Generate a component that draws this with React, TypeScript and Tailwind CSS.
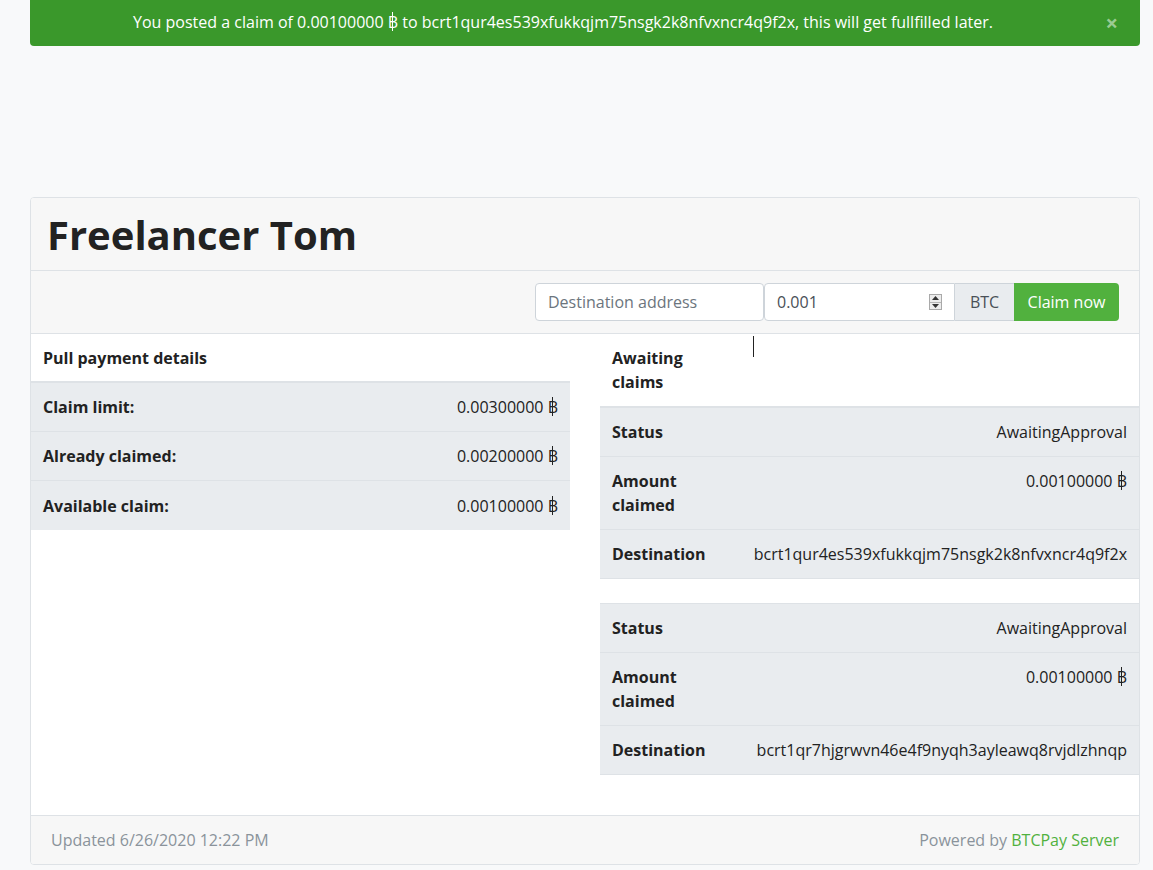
import React from "react";

type Row = { label: string; value: string; btc?: boolean; tall?: boolean };

const details: Row[] = [
  { label: "Claim limit:", value: "0.00300000", btc: true },
  { label: "Already claimed:", value: "0.00200000", btc: true },
  { label: "Available claim:", value: "0.00100000", btc: true },
];

const claims: Row[][] = [
  [
    { label: "Status", value: "AwaitingApproval" },
    { label: "Amount claimed", value: "0.00100000", btc: true, tall: true },
    { label: "Destination", value: "bcrt1qur4es539xfukkqjm75nsgk2k8nfvxncr4q9f2x" },
  ],
  [
    { label: "Status", value: "AwaitingApproval" },
    { label: "Amount claimed", value: "0.00100000", btc: true, tall: true },
    { label: "Destination", value: "bcrt1qr7hjgrwvn46e4f9nyqh3ayleawq8rvjdlzhnqp" },
  ],
];

// bitcoin-ish baht sign: a B with a stroke through it, like the reference's fallback glyph
function Baht() {
  return (
    <span className="relative inline-block" aria-label="฿">
      B
      <span className="absolute left-[4px] top-[2px] bottom-[3px] w-[1.5px] bg-current" />
    </span>
  );
}

function Spinner() {
  return (
    <div className="flex flex-col w-[13px] h-[16px] border border-[#a9a9a9] bg-[#ececec]">
      <div className="flex-1 flex items-center justify-center border-b border-[#b5b5b5]">
        <svg width="7" height="4" viewBox="0 0 7 4"><path d="M3.5 0L7 4H0z" fill="#333" /></svg>
      </div>
      <div className="flex-1 flex items-center justify-center">
        <svg width="7" height="4" viewBox="0 0 7 4"><path d="M0 0h7L3.5 4z" fill="#333" /></svg>
      </div>
    </div>
  );
}

export default function App() {
  return (
    <div
      className="w-full h-[870px] bg-[#f8f9fa] text-[#222] text-[16px] overflow-hidden"
      style={{ fontFamily: '"Open Sans", sans-serif' }}
    >
      {/* Alert */}
      <div className="ml-[30px] w-[1110px] h-[46px] bg-[#3a982b] rounded-b-[4px] flex items-center pl-5 pr-16 relative">
        <div className="flex-1 text-center text-white leading-6 pb-[2px]">
          You posted a claim of 0.00100000 <Baht /> to bcrt1qur4es539xfukkqjm75nsgk2k8nfvxncr4q9f2x, this will get fullfilled later.
        </div>
        <span className="absolute right-[22px] top-[10px] text-[22px] font-bold leading-6 text-[#9bcb92]">×</span>
      </div>

      {/* Card */}
      <div className="ml-[30px] w-[1110px] mt-[151px] bg-white border border-[#dee2e6] rounded-[4px] overflow-hidden">
        <div className="h-[73px] bg-[#f7f7f7] border-b border-[#dee2e6] px-[16px] flex items-center">
          <h1 className="text-[40px] font-bold leading-[48px] text-[#222] pt-[1px]">Freelancer Tom</h1>
        </div>

        <div className="h-[63px] bg-[#f7f7f7] border-b border-[#dee2e6] flex items-center justify-end pr-[20px]">
          <div className="flex h-[38px]">
            <input
              placeholder="Destination address"
              className="w-[229px] h-[38px] px-3 border border-[#ced4da] rounded-[4px] bg-white text-[16px] text-[#495057] placeholder:text-[#6c757d] outline-none"
            />
            <div className="w-[191px] h-[38px] px-3 border border-[#ced4da] rounded-l-[4px] bg-white flex items-center">
              <span className="flex-1 text-[#495057]">0.001</span>
              <Spinner />
            </div>
            <div className="w-[59px] h-[38px] border-y border-[#ced4da] bg-[#e9ecef] flex items-center justify-center text-[#495057]">
              BTC
            </div>
            <button className="w-[105px] h-[38px] bg-[#51b13e] text-white rounded-r-[4px] text-[16px]">Claim now</button>
          </div>
        </div>

        <div className="flex h-[481px]">
          {/* Left column */}
          <div className="w-[539px]">
            <div className="h-[49px] px-3 flex items-center font-bold border-b-2 border-[#dee2e6]">Pull payment details</div>
            {details.map((r) => (
              <div key={r.label} className="h-[49px] px-3 flex items-center justify-between bg-[#e9ecef] border-b border-[#dee2e6] last:border-b-0">
                <span className="font-bold">{r.label}</span>
                <span>{r.value} <Baht /></span>
              </div>
            ))}
          </div>

          {/* Right column */}
          <div className="ml-[30px] flex-1">
            <div className="h-[74px] flex border-b-2 border-[#dee2e6]">
              <div className="w-[141px] px-3 py-3 font-bold leading-6">Awaiting<br />claims</div>
              <div className="px-3 pt-[2px]">
                <div className="w-[1px] h-[21px] bg-[#222]" />
              </div>
            </div>
            {claims.map((group, gi) => (
              <div key={gi} className={gi > 0 ? "mt-[24px] border-t border-[#dee2e6]" : ""}>
                {group.map((r) => (
                  <div
                    key={r.label}
                    className={`flex bg-[#e9ecef] border-b border-[#dee2e6] leading-6 ${r.tall ? "h-[73px]" : "h-[49px]"}`}
                  >
                    <div className="w-[141px] px-3 py-3 font-bold">{r.tall ? <>Amount<br />claimed</> : r.label}</div>
                    <div className="flex-1 px-3 py-3 text-right">
                      {r.value}
                      {r.btc && <> <Baht /></>}
                    </div>
                  </div>
                ))}
              </div>
            ))}
          </div>
        </div>

        <div className="h-[49px] bg-[#f7f7f7] border-t border-[#dee2e6] px-5 flex items-center justify-between text-[#8a939b]">
          <span>Updated 6/26/2020 12:22 PM</span>
          <span>
            Powered by <span className="text-[#51b13e]">BTCPay Server</span>
          </span>
        </div>
      </div>
    </div>
  );
}
